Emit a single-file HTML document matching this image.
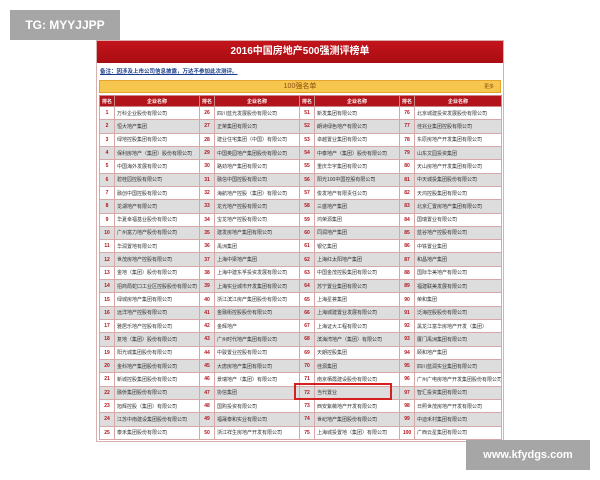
<!DOCTYPE html>
<html><head><meta charset="utf-8"><style>
*{margin:0;padding:0;box-sizing:border-box}
body{width:600px;height:480px;background:#fff;position:relative;overflow:hidden;font-family:"Liberation Sans","Noto Sans CJK SC",sans-serif}
.wm{position:absolute;background:#a6a6a6;color:#fff;font-weight:bold;display:flex;align-items:center;justify-content:center}
#frame{position:absolute;left:96px;top:40px;width:408px;height:402px;background:#fff;border:1px solid #d9b0b0}
#title{position:absolute;left:0;top:0;width:406px;height:22px;background:linear-gradient(#c4141c,#a80d12);color:#fff;font-size:10px;font-weight:bold;text-align:center;line-height:22px}
#note{position:absolute;left:3px;top:26px;font-size:5.5px;color:#1a3c8c;font-weight:bold;text-decoration:underline}
#yel{position:absolute;left:2px;top:39px;width:402px;height:13px;background:#f6c64e;border:1px solid #e3a52e;font-size:7px;color:#8a4a10;text-align:center;line-height:12px}
#yel span{position:absolute;right:6px;top:0;font-size:5px}
table{position:absolute;left:2px;top:54px;width:402px;border-collapse:collapse;table-layout:fixed;font-size:5px}
th{background:#b3131a;color:#fff;height:11px;font-weight:bold;font-size:5px;border:1px solid #c88}
td{height:13.32px;border:1px solid #d6a8a8;white-space:nowrap;overflow:hidden;color:#333;padding-left:2px}
td.r{color:#b3131a;text-align:center;padding:0;font-weight:bold}
tr:nth-child(odd) td{background:#ddd}
#hl{position:absolute;left:294px;top:383px;width:98px;height:17px;border:2px solid #d42020}
</style></head><body>
<div class="wm" style="left:10px;top:10px;width:110px;height:30px;font-size:12px">TG: MYYJJPP</div>
<div id="frame">
<div id="title">2016中国房地产500强测评榜单</div>
<div id="note">备注：因涉及上市公司信息披露，万达不参加此次测评。</div>
<div id="yel">100强名单<span>更多</span></div>
<table>
<colgroup><col style="width:15px"><col style="width:85px"><col style="width:15px"><col style="width:85px"><col style="width:15px"><col style="width:85px"><col style="width:15px"><col style="width:87px"></colgroup>
<tr><th>排名</th><th>企业名称</th><th>排名</th><th>企业名称</th><th>排名</th><th>企业名称</th><th>排名</th><th>企业名称</th></tr>
<tr><td class="r">1</td><td>万科企业股份有限公司</td><td class="r">26</td><td>四川蓝光发展股份有限公司</td><td class="r">51</td><td>新发集团有限公司</td><td class="r">76</td><td>北京城建投资发展股份有限公司</td></tr>
<tr><td class="r">2</td><td>恒大地产集团</td><td class="r">27</td><td>正荣集团有限公司</td><td class="r">52</td><td>朗诗绿色地产有限公司</td><td class="r">77</td><td>佳兆业集团控股有限公司</td></tr>
<tr><td class="r">3</td><td>绿地控股集团有限公司</td><td class="r">28</td><td>建业住宅集团（中国）有限公司</td><td class="r">53</td><td>卓越置业集团有限公司</td><td class="r">78</td><td>东原房地产开发集团有限公司</td></tr>
<tr><td class="r">4</td><td>保利房地产（集团）股份有限公司</td><td class="r">29</td><td>中国奥园地产集团股份有限公司</td><td class="r">54</td><td>中泰地产（集团）股份有限公司</td><td class="r">79</td><td>山东文园投资集团</td></tr>
<tr><td class="r">5</td><td>中国海外发展有限公司</td><td class="r">30</td><td>路劲地产集团有限公司</td><td class="r">55</td><td>重庆华宇集团有限公司</td><td class="r">80</td><td>天山房地产开发集团有限公司</td></tr>
<tr><td class="r">6</td><td>碧桂园控股有限公司</td><td class="r">31</td><td>融信中国控股有限公司</td><td class="r">56</td><td>阳光100中国控股有限公司</td><td class="r">81</td><td>中天城投集团股份有限公司</td></tr>
<tr><td class="r">7</td><td>融创中国控股有限公司</td><td class="r">32</td><td>海航地产控股（集团）有限公司</td><td class="r">57</td><td>俊发地产有限责任公司</td><td class="r">82</td><td>天鸿控股集团有限公司</td></tr>
<tr><td class="r">8</td><td>龙湖地产有限公司</td><td class="r">33</td><td>龙光地产控股有限公司</td><td class="r">58</td><td>三盛地产集团</td><td class="r">83</td><td>北京汇置房地产集团有限公司</td></tr>
<tr><td class="r">9</td><td>华夏幸福基业股份有限公司</td><td class="r">34</td><td>宝龙地产控股有限公司</td><td class="r">59</td><td>鸿荣源集团</td><td class="r">84</td><td>国瑞置业有限公司</td></tr>
<tr><td class="r">10</td><td>广州富力地产股份有限公司</td><td class="r">35</td><td>建发房地产集团有限公司</td><td class="r">60</td><td>同润地产集团</td><td class="r">85</td><td>蓝谷地产控股有限公司</td></tr>
<tr><td class="r">11</td><td>华润置地有限公司</td><td class="r">36</td><td>禹洲集团</td><td class="r">61</td><td>银亿集团</td><td class="r">86</td><td>中铁置业集团</td></tr>
<tr><td class="r">12</td><td>世茂房地产控股有限公司</td><td class="r">37</td><td>上海中梁地产集团</td><td class="r">62</td><td>上海红太阳地产集团</td><td class="r">87</td><td>和昌地产集团</td></tr>
<tr><td class="r">13</td><td>金地（集团）股份有限公司</td><td class="r">38</td><td>上海中建东孚投资发展有限公司</td><td class="r">63</td><td>中国金茂控股集团有限公司</td><td class="r">88</td><td>国际华美地产有限公司</td></tr>
<tr><td class="r">14</td><td>招商局蛇口工业区控股股份有限公司</td><td class="r">39</td><td>上海实业城市开发集团有限公司</td><td class="r">64</td><td>苏宁置业集团有限公司</td><td class="r">89</td><td>福建联美发展有限公司</td></tr>
<tr><td class="r">15</td><td>绿城房地产集团有限公司</td><td class="r">40</td><td>浙江滨江房产集团股份有限公司</td><td class="r">65</td><td>上海星荟集团</td><td class="r">90</td><td>荣和集团</td></tr>
<tr><td class="r">16</td><td>远洋地产控股有限公司</td><td class="r">41</td><td>金融街控股股份有限公司</td><td class="r">66</td><td>上海城建置业发展有限公司</td><td class="r">91</td><td>泛海控股股份有限公司</td></tr>
<tr><td class="r">17</td><td>雅居乐地产控股有限公司</td><td class="r">42</td><td>金辉地产</td><td class="r">67</td><td>上海证大工程有限公司</td><td class="r">92</td><td>黑龙江富华房地产开发（集团）</td></tr>
<tr><td class="r">18</td><td>复地（集团）股份有限公司</td><td class="r">43</td><td>广州时代地产集团有限公司</td><td class="r">68</td><td>滨海湾地产（集团）有限公司</td><td class="r">93</td><td>厦门禹洲集团有限公司</td></tr>
<tr><td class="r">19</td><td>阳光城集团股份有限公司</td><td class="r">44</td><td>中骏置业控股有限公司</td><td class="r">69</td><td>天朗控股集团</td><td class="r">94</td><td>颐和地产集团</td></tr>
<tr><td class="r">20</td><td>金科地产集团股份有限公司</td><td class="r">45</td><td>大唐房地产集团有限公司</td><td class="r">70</td><td>佳源集团</td><td class="r">95</td><td>四川蓝润实业集团有限公司</td></tr>
<tr><td class="r">21</td><td>新城控股集团股份有限公司</td><td class="r">46</td><td>景瑞地产（集团）有限公司</td><td class="r">71</td><td>南京栖霞建设股份有限公司</td><td class="r">96</td><td>广州广电房地产开发集团股份有限公司</td></tr>
<tr><td class="r">22</td><td>融侨集团股份有限公司</td><td class="r">47</td><td>协信集团</td><td class="r">72</td><td>当代置业</td><td class="r">97</td><td>智汇投资集团有限公司</td></tr>
<tr><td class="r">23</td><td>旭辉控股（集团）有限公司</td><td class="r">48</td><td>国购投资有限公司</td><td class="r">73</td><td>西安紫薇地产开发有限公司</td><td class="r">98</td><td>日照世茂房地产开发有限公司</td></tr>
<tr><td class="r">24</td><td>江苏中南建设集团股份有限公司</td><td class="r">49</td><td>福晟泰和实业有限公司</td><td class="r">74</td><td>世纪地产集团股份有限公司</td><td class="r">99</td><td>中迪禾村集团有限公司</td></tr>
<tr><td class="r">25</td><td>泰禾集团股份有限公司</td><td class="r">50</td><td>浙江祥生房地产开发有限公司</td><td class="r">75</td><td>上海城投置地（集团）有限公司</td><td class="r">100</td><td>广西云星集团有限公司</td></tr>
</table>
</div>
<div id="hl"></div>
<div class="wm" style="left:466px;top:440px;width:124px;height:30px;font-size:11px">www.kfydgs.com</div>
</body></html>
